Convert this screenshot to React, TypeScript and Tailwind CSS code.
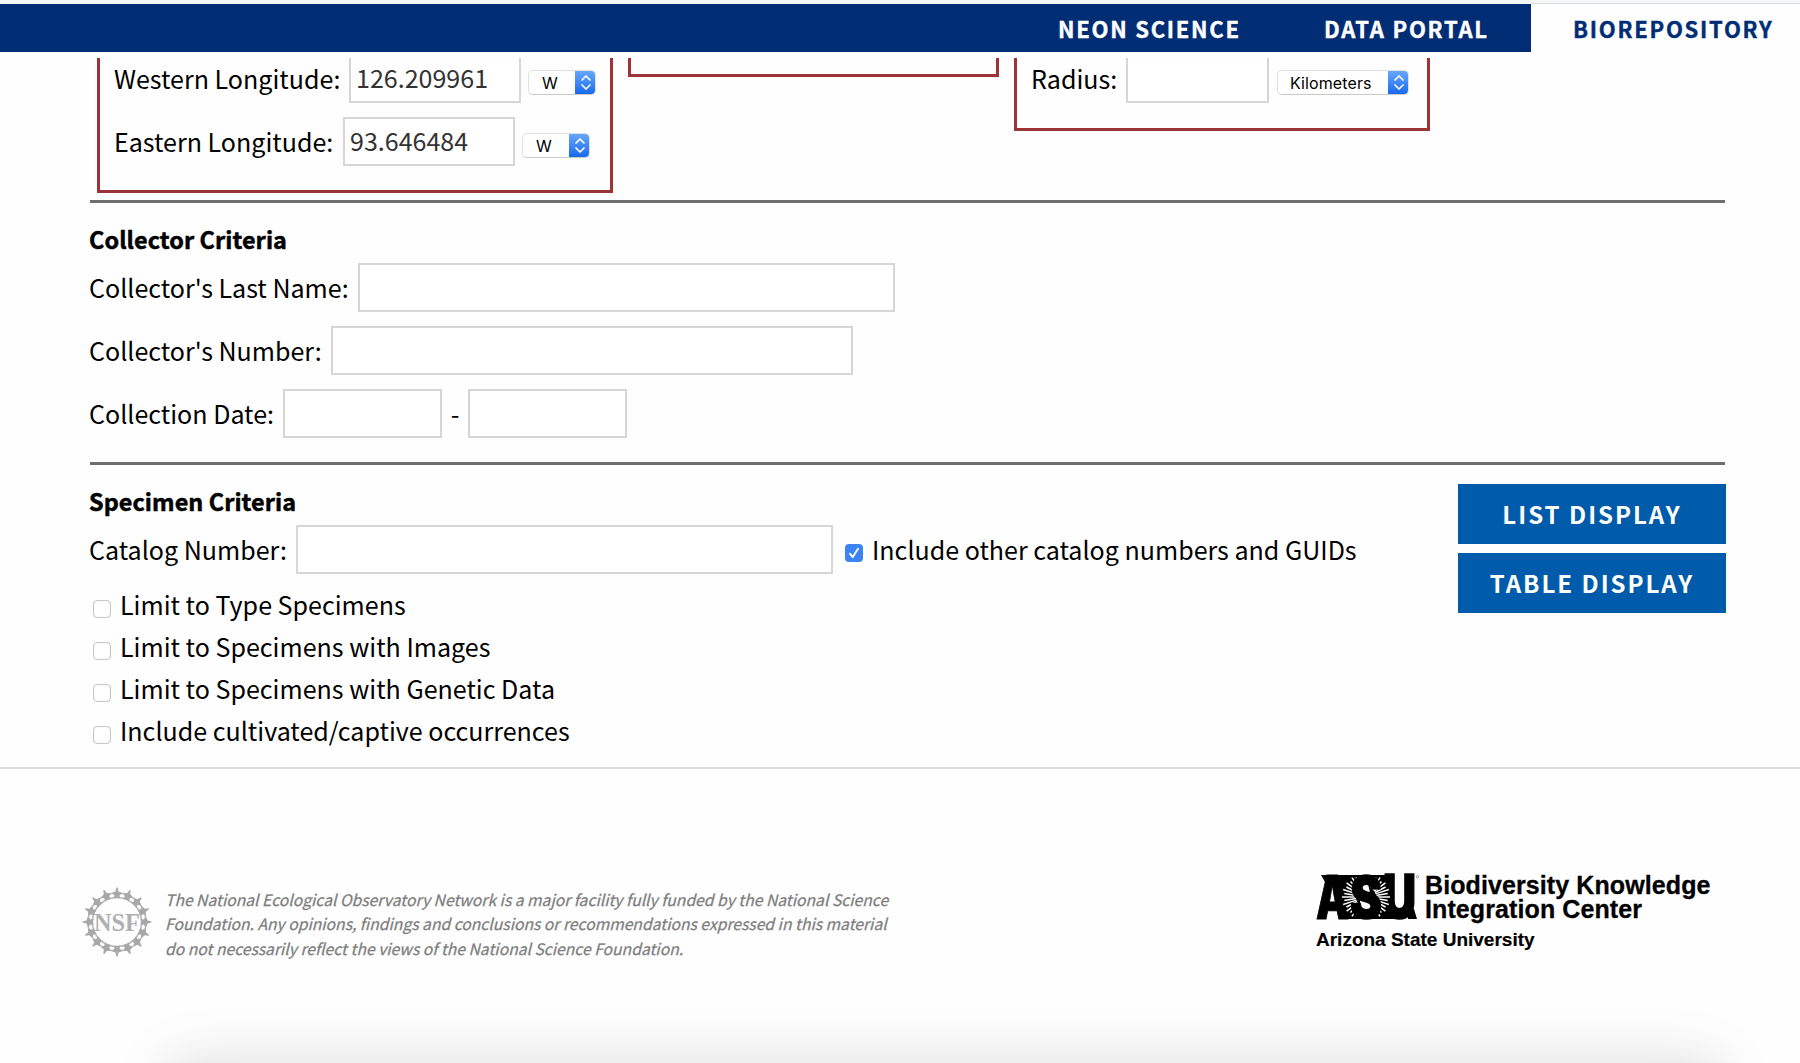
import type { ReactNode } from "react";

const field = "box-border h-[49px] shrink-0 border-2 border-[#d6d6d6] bg-white";
const heading = "-ml-px text-[23.4px] leading-[36px] font-bold tracking-[0.07px] [-webkit-text-stroke:0.5px_black]";
const action = "h-[60px] bg-[#005cab] text-[24px] font-bold tracking-[2px] text-white";

function NavLink({ children, className }: { children: ReactNode; className: string }) {
  return (
    <a className={`text-[22px] leading-[48px] font-bold whitespace-nowrap tracking-[1.75px] [-webkit-text-stroke:0.4px_currentColor] ${className}`}>
      {children}
    </a>
  );
}

function Label({ children, className }: { children: ReactNode; className: string }) {
  return <span className={`-mt-[2px] -ml-px whitespace-nowrap ${className}`}>{children}</span>;
}

function Select({ value, className }: { value: string; className: string }) {
  return (
    <div
      className={`mt-[8px] flex h-[25px] shrink-0 overflow-hidden rounded-[5px] border border-[#e0e0e0] border-b-[#c9c9c9] bg-white text-black ${className}`}
    >
      <span className="grow font-[Inter] text-[16px] leading-[25px]">{value}</span>
      <span className="-my-px -mr-px flex w-[21px] items-center justify-center bg-linear-to-b from-[#6aa9fa] to-[#0f66ee]">
        <svg width="12" height="17" viewBox="0 0 12 17" fill="none" stroke="white" strokeWidth="1.7" strokeLinecap="round" strokeLinejoin="round">
          <path d="M2 6 L6 2 L10 6 M2 11 L6 15 L10 11" />
        </svg>
      </span>
    </div>
  );
}

function Checkbox({ checked }: { checked?: boolean }) {
  return checked ? (
    <span className="flex size-[18px] shrink-0 items-center justify-center rounded-[4px] bg-[#3c84f4]">
      <svg width="12" height="12" viewBox="0 0 12 12" fill="none" stroke="white" strokeWidth="1.9" strokeLinecap="round" strokeLinejoin="round">
        <path d="M2 6.8 L4.8 10 L10 1.8" />
      </svg>
    </span>
  ) : (
    <span className="block size-[18px] shrink-0 rounded-[4px] border border-[#c8c8c8] bg-white shadow-[inset_0_0_1px_#c8c8c8]" />
  );
}

function NsfLogo() {
  const spokes = Array.from({ length: 16 }, (_, i) => i * 22.5);
  return (
    <svg width="70" height="70" viewBox="-35 -35 70 70" className="shrink-0">
      <circle r="29" fill="none" stroke="#b8b8b8" strokeWidth="1.5" />
      <circle r="24.6" fill="none" stroke="#b8b8b8" strokeWidth="1.5" />
      {spokes.map((a) => (
        <path
          key={a}
          transform={`rotate(${a})`}
          d="M-0.6 -34.5 H0.6 L1.6 -30.6 L4.4 -29.4 V-28 L2.6 -26.8 L3.2 -23.6 L0 -24.2 L-3.2 -23.6 L-2.6 -26.8 L-4.4 -28 V-29.4 L-1.6 -30.6 Z"
          fill="#a8a8a8"
        />
      ))}
      <text x="0" y="8.5" textAnchor="middle" textLength="46" lengthAdjust="spacingAndGlyphs" className="font-['Liberation_Serif'] text-[25px] font-bold" fill="#b0b0b0">
        NSF
      </text>
    </svg>
  );
}

function AsuLogo() {
  const fan = Array.from({ length: 15 }, (_, i) => -63 + i * 9);
  return (
    <svg width="104" height="46" viewBox="0 0 104 46" className="shrink-0 overflow-visible font-[Inter]" fontWeight="900">
      <text x="0" y="44" fontSize="60" textLength="33" lengthAdjust="spacingAndGlyphs" fill="black" stroke="black" strokeWidth="1">A</text>
      <path d="M5 0 H26 V7 H9 Z" fill="black" />
      <path d="M22 0 H44 V44 H25 Z" fill="black" />
      <text x="67" y="43.4" fontSize="60" textLength="33" lengthAdjust="spacingAndGlyphs" fill="black" stroke="black" strokeWidth="1.6">U</text>
      <path d="M50 0 H78 V44 H60 Z M92 34 H98 L101 44 H92 Z" fill="black" />
      <path d="M44 0 H56 V4 H44 Z M34 40 H66 V44 H34 Z" fill="black" />
      {fan.map((a) => (
        <g key={a} stroke="white" strokeWidth="1.5">
          <line x1="10" y1="0" x2={a % 2 ? 22 : 24} y2="0" transform={`translate(50 22) rotate(${a})`} />
          <line x1="-10" y1="0" x2={a % 2 ? -22 : -24} y2="0" transform={`translate(50 22) rotate(${a})`} />
        </g>
      ))}
      <text x="34" y="43.2" fontSize="58" textLength="32" lengthAdjust="spacingAndGlyphs" fill="black" stroke="black" strokeWidth="1.4">S</text>
      <circle cx="101.5" cy="1.8" r="1.2" fill="none" stroke="#888" strokeWidth="0.8" />
    </svg>
  );
}

const limits = [
  "Limit to Type Specimens",
  "Limit to Specimens with Images",
  "Limit to Specimens with Genetic Data",
  "Include cultivated/captive occurrences",
];

export default function App() {
  return (
    <div className="relative flex h-[1063px] w-[1800px] flex-col overflow-hidden bg-[#fefefe] font-['Noto_Sans_CJK_SC',sans-serif] text-[25.05px] leading-[36px] text-black">
      <div className="flex h-[4px] shrink-0 justify-end bg-[#f5f6f8]">
        <div className="w-[269px] border-b border-[#dcdcdc]" />
      </div>
      <header className="flex h-[48px] shrink-0">
        <nav className="flex w-[1531px] bg-[#002d74] text-white">
          <NavLink className="ml-[1058px] w-[266px]">NEON SCIENCE</NavLink>
          <NavLink className="">DATA PORTAL</NavLink>
        </nav>
        <NavLink className="ml-[42px] text-[#002d74]">BIOREPOSITORY</NavLink>
      </header>

      <section className="mt-[6px] ml-[97px] flex h-[142px] shrink-0 items-start overflow-hidden">
        <div className="h-[135px] w-[516px] overflow-hidden border-3 border-t-0 border-[#9b3337] pl-[15px]">
          <div className="-mt-[4px] flex h-[49px] items-center">
            <Label className="w-[235px]">Western Longitude:</Label>
            <div className={`${field} flex w-[172px] items-center pb-[3px] pl-[5px] text-[#333]`}>126.209961</div>
            <Select value="W" className="ml-[7px] w-[68px] pl-[13px]" />
          </div>
          <div className="mt-[14px] flex h-[49px] items-center">
            <Label className="w-[229px]">Eastern Longitude:</Label>
            <div className={`${field} flex w-[172px] items-center pb-[3px] pl-[5px] text-[#333]`}>93.646484</div>
            <Select value="W" className="ml-[7px] w-[68px] pl-[13px]" />
          </div>
        </div>
        <div className="ml-[15px] h-[19px] w-[371px] border-3 border-t-0 border-[#9b3337]" />
        <div className="ml-[15px] h-[73px] w-[416px] overflow-hidden border-3 border-t-0 border-[#9b3337] pl-[15px]">
          <div className="-mt-[4px] flex h-[49px] items-center">
            <Label className="w-[95px]">Radius:</Label>
            <div className={`${field} w-[143px]`} />
            <Select value="Kilometers" className="ml-[8px] w-[132px] pl-[12px] tracking-[0.1px]" />
          </div>
        </div>
      </section>

      <section className="ml-[90px] h-[262px] w-[1635px] shrink-0 border-t-3 border-[#6e6e6e] pt-[18px]">
        <h2 className={heading}>Collector Criteria</h2>
        <div className="mt-[6px] flex h-[49px] items-center">
          <Label className="w-[269px]">Collector&apos;s Last Name:</Label>
          <div className={`${field} w-[537px]`} />
        </div>
        <div className="mt-[14px] flex h-[49px] items-center">
          <Label className="w-[242px]">Collector&apos;s Number:</Label>
          <div className={`${field} w-[522px]`} />
        </div>
        <div className="mt-[14px] flex h-[49px] items-center">
          <Label className="w-[194px]">Collection Date:</Label>
          <div className={`${field} w-[159px]`} />
          <span className="-mt-[2px] w-[26px] text-center">-</span>
          <div className={`${field} w-[159px]`} />
        </div>
      </section>

      <section className="ml-[90px] flex h-[305px] w-[1636px] shrink-0 justify-between">
        <div className="grow border-t-3 border-[#6e6e6e] pt-[18px]">
          <h2 className={heading}>Specimen Criteria</h2>
          <div className="mt-[6px] flex h-[49px] items-center">
            <Label className="w-[207px]">Catalog Number:</Label>
            <div className={`${field} w-[537px]`} />
            <div className="ml-[12px] flex items-center gap-[10px]">
              <div className="mt-[7px]">
                <Checkbox checked />
              </div>
              <Label className="">Include other catalog numbers and GUIDs</Label>
            </div>
          </div>
          <div className="mt-[10px] ml-[3px]">
            {limits.map((label) => (
              <div key={label} className="flex h-[42px] items-center gap-[10px]">
                <div className="mt-[7px]">
                  <Checkbox />
                </div>
                <Label className="">{label}</Label>
              </div>
            ))}
          </div>
        </div>
        <div className="w-[268px] shrink-0">
          <div className="mr-px border-t-3 border-[#6e6e6e]" />
          <div className="mt-[19px] flex flex-col gap-[9px]">
            <button className={action}>LIST DISPLAY</button>
            <button className={action}>TABLE DISPLAY</button>
          </div>
        </div>
      </section>

      <footer className="flex h-[296px] shrink-0 items-start border-t-2 border-[#dedede]">
        <div className="mt-[118px] ml-[82px] flex">
          <NsfLogo />
        </div>
        <p className="mt-[119px] ml-[13px] text-[15.68px] leading-[24.4px] whitespace-nowrap text-[#7d7d7d] italic [-webkit-text-stroke:0.25px_#7d7d7d]">
          The National Ecological Observatory Network is a major facility fully funded by the National Science
          <br />
          Foundation. Any opinions, findings and conclusions or recommendations expressed in this material
          <br />
          do not necessarily reflect the views of the National Science Foundation.
        </p>
        <div className="mt-[106px] ml-auto w-[484px] font-['Liberation_Sans'] font-bold">
          <div className="flex gap-[5px]">
            <AsuLogo />
            <div className="-mt-[2px] text-[25px] leading-[24px] tracking-[0.1px] [-webkit-text-stroke:0.3px_black]">
              Biodiversity Knowledge
              <br />
              Integration Center
            </div>
          </div>
          <div className="mt-[7px] text-[19px] leading-[24px] [-webkit-text-stroke:0.2px_black]">Arizona State University</div>
        </div>
      </footer>

      <div className="absolute top-[1063px] left-[170px] h-[100px] w-[1548px] shadow-[0_0_60px_rgba(0,0,0,0.14)]" />
    </div>
  );
}
